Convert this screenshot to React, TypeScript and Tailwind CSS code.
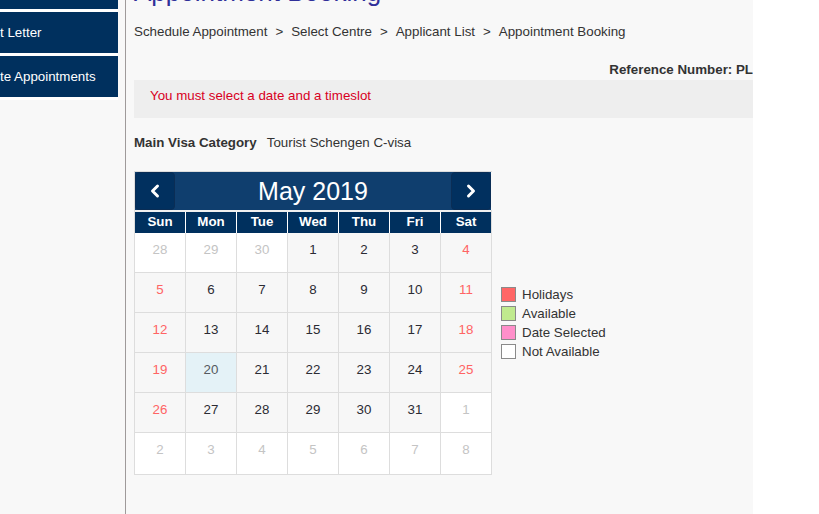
const FONT = { fontFamily: '"Liberation Sans", Arial, sans-serif' };

type Cell = { d: number; kind: "other" | "day" | "weekend" | "selected" };

const WEEKS: Cell[][] = [
  [
    { d: 28, kind: "other" },
    { d: 29, kind: "other" },
    { d: 30, kind: "other" },
    { d: 1, kind: "day" },
    { d: 2, kind: "day" },
    { d: 3, kind: "day" },
    { d: 4, kind: "weekend" },
  ],
  [5, 6, 7, 8, 9, 10, 11].map((d, i) => ({ d, kind: i === 0 || i === 6 ? "weekend" : "day" })),
  [12, 13, 14, 15, 16, 17, 18].map((d, i) => ({ d, kind: i === 0 || i === 6 ? "weekend" : "day" })),
  [19, 20, 21, 22, 23, 24, 25].map((d, i) => ({
    d,
    kind: i === 0 || i === 6 ? "weekend" : d === 20 ? "selected" : "day",
  })),
  [
    { d: 26, kind: "weekend" },
    { d: 27, kind: "day" },
    { d: 28, kind: "day" },
    { d: 29, kind: "day" },
    { d: 30, kind: "day" },
    { d: 31, kind: "day" },
    { d: 1, kind: "other" },
  ],
  [2, 3, 4, 5, 6, 7, 8].map((d) => ({ d, kind: "other" as const })),
];

const DAYS = ["Sun", "Mon", "Tue", "Wed", "Thu", "Fri", "Sat"];

const CRUMBS = ["Schedule Appointment", "Select Centre", "Applicant List", "Appointment Booking"];

const CELL_STYLE: Record<Cell["kind"], string> = {
  other: "bg-white text-[#c4c4c4]",
  day: "bg-[#f7f7f7] text-[#2b2b33]",
  weekend: "bg-[#f7f7f7] text-[#ff6464]",
  selected: "bg-[#e4f2f7] text-[#555a60]",
};

const LEGEND = [
  { label: "Holidays", color: "bg-[#ff6666]" },
  { label: "Available", color: "bg-[#c0ea8e]" },
  { label: "Date Selected", color: "bg-[#ff8fca]" },
  { label: "Not Available", color: "bg-white" },
];

function Chevron({ dir }: { dir: "left" | "right" }) {
  return (
    <svg width="12" height="16" viewBox="0 0 12 16">
      <polyline
        points={dir === "left" ? "8.5,3 3.5,8 8.5,13" : "3.5,3 8.5,8 3.5,13"}
        fill="none"
        stroke="white"
        strokeWidth="3"
        strokeLinecap="round"
        strokeLinejoin="round"
      />
    </svg>
  );
}

function Calendar() {
  return (
    <div className="w-[358px] border-l border-t border-[#dddddd]">
      <div className="flex h-[38px] items-stretch justify-between bg-[#0f3e6e] mr-px">
        <button className="w-[40px] rounded-[4px] bg-[#01305f] border border-[#0a2d55] flex items-center justify-center">
          <Chevron dir="left" />
        </button>
        <div className="text-white text-[25px] leading-[38px] pb-[2px]">May 2019</div>
        <button className="w-[40px] rounded-[4px] bg-[#01305f] border border-[#0a2d55] flex items-center justify-center">
          <Chevron dir="right" />
        </button>
      </div>
      <div className="h-[2px] border-r border-[#dddddd] bg-[#f0f0f0]" />
      <div className="grid grid-cols-7">
        {DAYS.map((d, i) => (
          <div
            key={d}
            className={`h-[21px] bg-[#00305e] text-white font-bold leading-[20px] text-center ${
              i < 6 ? "border-r border-white" : "border-r border-[#dddddd]"
            }`}
          >
            {d}
          </div>
        ))}
      </div>
      {WEEKS.map((w, wi) => (
        <div key={wi} className="grid grid-cols-7">
          {w.map((c, ci) => (
            <div
              key={ci}
              className={`${
                wi === WEEKS.length - 1 ? "h-[42px] pb-[7px]" : "h-[40px] pb-[5px]"
              } border-r border-b border-[#dddddd] flex items-center justify-center ${CELL_STYLE[c.kind]}`}
            >
              {c.d}
            </div>
          ))}
        </div>
      ))}
    </div>
  );
}

export default function App() {
  return (
    <div className="flex h-screen w-full overflow-hidden bg-white text-[13.33px] text-[#333333]" style={FONT}>
      <aside className="w-[126px] shrink-0 bg-[#f8f8f8] border-r border-[#9f9a9a]">
        <div className="-mt-[32px] flex w-[118px] flex-col gap-[3px] bg-white pb-[3px]">
          <div className="h-[41px] bg-[#00305e]" />
          <div className="h-[41px] bg-[#00305e] text-white leading-[41px] whitespace-nowrap overflow-hidden">
            t Letter
          </div>
          <div className="h-[41px] bg-[#00305e] text-white leading-[41px] whitespace-nowrap overflow-hidden">
            te Appointments
          </div>
        </div>
      </aside>

      <main className="w-[627px] shrink-0 overflow-hidden bg-[#f8f8f8] pl-2">
        <h1 className="-mt-[23px] h-[30px] text-[26px] leading-[30px] text-[#30309a] whitespace-nowrap">
          Appointment Booking
        </h1>
        <div className="mt-[16px] flex leading-[18px] whitespace-nowrap">
          {CRUMBS.map((c, i) => (
            <span key={c} className="flex">
              {i > 0 && <span className="mx-[8px]">&gt;</span>}
              {c}
            </span>
          ))}
        </div>
        <div className="mt-[20px] flex justify-end leading-[18px] font-bold whitespace-nowrap">
          Reference Number: PL
        </div>
        <div className="mt-[1px] h-[38px] bg-[#eeeeee] pl-4 pt-[7px] leading-[18px] text-[#d8001e]">
          You must select a date and a timeslot
        </div>
        <div className="mt-[16px] flex gap-[10px] leading-[18px]">
          <span className="font-bold">Main Visa Category</span>
          <span>Tourist Schengen C-visa</span>
        </div>
        <div className="mt-[19px] flex items-center gap-[9px]">
          <Calendar />
          <div className="flex flex-col gap-[4px]">
            {LEGEND.map((l) => (
              <div key={l.label} className="flex items-center gap-[6px] h-[15px]">
                <span className={`w-[15px] h-[15px] border border-[#8a8a8a] ${l.color}`} />
                <span className="leading-[15px]">{l.label}</span>
              </div>
            ))}
          </div>
        </div>
      </main>
      <div className="flex-1 bg-white" />
    </div>
  );
}
